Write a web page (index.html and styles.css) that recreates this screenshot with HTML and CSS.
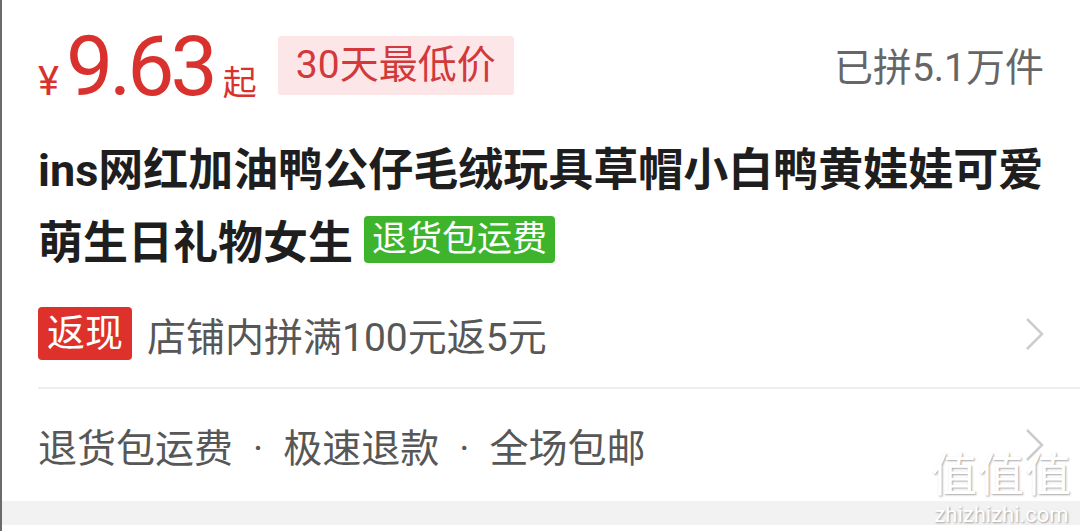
FILE: index.html
```html
<!DOCTYPE html>
<html lang="zh-CN">
<head>
    <meta charset="UTF-8">
    <meta name="viewport" content="width=device-width, initial-scale=1.0">
    <title>商品信息</title>
    <link rel="stylesheet" href="styles.css">
</head>
<body>

    <div class="page">
        <div class="goods">
            <!-- Price -->
            <div class="price-row">
                <div class="price">
                    <span class="yen">¥</span>
                    <span class="amount">9.63</span>
                    <span class="from">起</span>
                </div>
                <span class="low-tag">30天最低价</span>
                <div class="sold">已拼5.1万件</div>
            </div>

            <!-- Title -->
            <h1 class="title">ins网红加油鸭公仔毛绒玩具草帽小白鸭黄娃娃可爱萌生日礼物女生<span class="free-return">退货包运费</span></h1>

            <!-- Promotion -->
            <div class="row promo">
                <span class="cash-tag">返现</span>
                <span class="row-text">店铺内拼满100元返5元</span>
                <svg class="arrow" viewBox="0 0 20 34"><polyline points="3,2 18,17 3,32" /></svg>
            </div>

            <div class="row service">
                <span class="row-text">
                    <span>退货包运费</span><span class="dot">·</span><span>极速退款</span><span class="dot">·</span><span>全场包邮</span>
                </span>
                <svg class="arrow" viewBox="0 0 20 34"><polyline points="3,2 18,17 3,32" /></svg>
            </div>
        </div>

        <div class="gap"></div>

        <div class="watermark">
            <span class="wm-big">值值值</span>
            <span class="wm-small">zhizhizhi.com</span>
        </div>
    </div>

</body>
</html>
```

FILE: styles.css
```css
/* General */
body {
    margin: 0;
    padding: 0;
    background: #fff;
    font-family: Roboto, "Noto Sans CJK SC", sans-serif;
}

.page {
    position: relative;
    height: 531px;
    border-left: 2px solid #6b6b6b;
    overflow: hidden;
}

.goods {
    padding: 0 36px;
}

/* Price row */
.price-row {
    display: flex;
    align-items: center;
    height: 132px;
    padding-bottom: 2px;
    box-sizing: border-box;
}

.price {
    display: flex;
    align-items: baseline;
    color: #d8312e;
    margin-top: 4px;
}

.yen {
    font-size: 40px;
    margin-right: 7px;
}

.amount {
    font-size: 84px;
    letter-spacing: -4px;
    line-height: 1;
}

.from {
    font-size: 34px;
    margin-left: 9px;
}

.low-tag {
    margin-left: 21px;
    background: #fde6e8;
    color: #d2393a;
    font-size: 39px;
    line-height: 59px;
    padding: 0 18px;
    border-radius: 3px;
}

.sold {
    margin-left: auto;
    color: #666;
    font-size: 39px;
    margin-top: -2px;
}

/* Title */
.title {
    margin: 2px 0 0 0;
    font-size: 45px;
    font-weight: bold;
    line-height: 73px;
    color: #1e1e1e;
}

.free-return {
    display: inline-block;
    vertical-align: 8px;
    background: #3db42c;
    color: #fff;
    font-size: 35px;
    font-weight: normal;
    line-height: 47px;
    padding: 0 8px;
    border-radius: 4px;
    margin-left: 11px;
}

/* Rows */
.row {
    display: flex;
    align-items: center;
}

.promo {
    height: 107px;
    border-bottom: 2px solid #eeeeee;
    margin-right: -36px;
    padding-right: 36px;
}

.service {
    height: 112px;
}

.cash-tag {
    background: #df312c;
    color: #fff;
    font-size: 38px;
    line-height: 53px;
    padding: 0 9px;
    border-radius: 4px;
    margin-right: 15px;
}

.row-text {
    flex: 1;
    color: #575757;
    font-size: 39px;
}

.dot {
    margin: 0 20px;
}

.arrow {
    width: 20px;
    height: 34px;
    fill: none;
    stroke: #cccccc;
    stroke-width: 2.5;
}

.gap {
    height: 24px;
    background: #f2f2f2;
}

/* Watermark */
.watermark {
    position: absolute;
    right: 8px;
    bottom: 4px;
    display: flex;
    flex-direction: column;
    align-items: center;
    color: #fff;
    text-shadow: 1px 1px 2px rgba(0, 0, 0, 0.35);
}

.wm-big {
    font-size: 46px;
    line-height: 56px;
    letter-spacing: 1px;
}

.wm-small {
    font-size: 22px;
    line-height: 24px;
}
```
